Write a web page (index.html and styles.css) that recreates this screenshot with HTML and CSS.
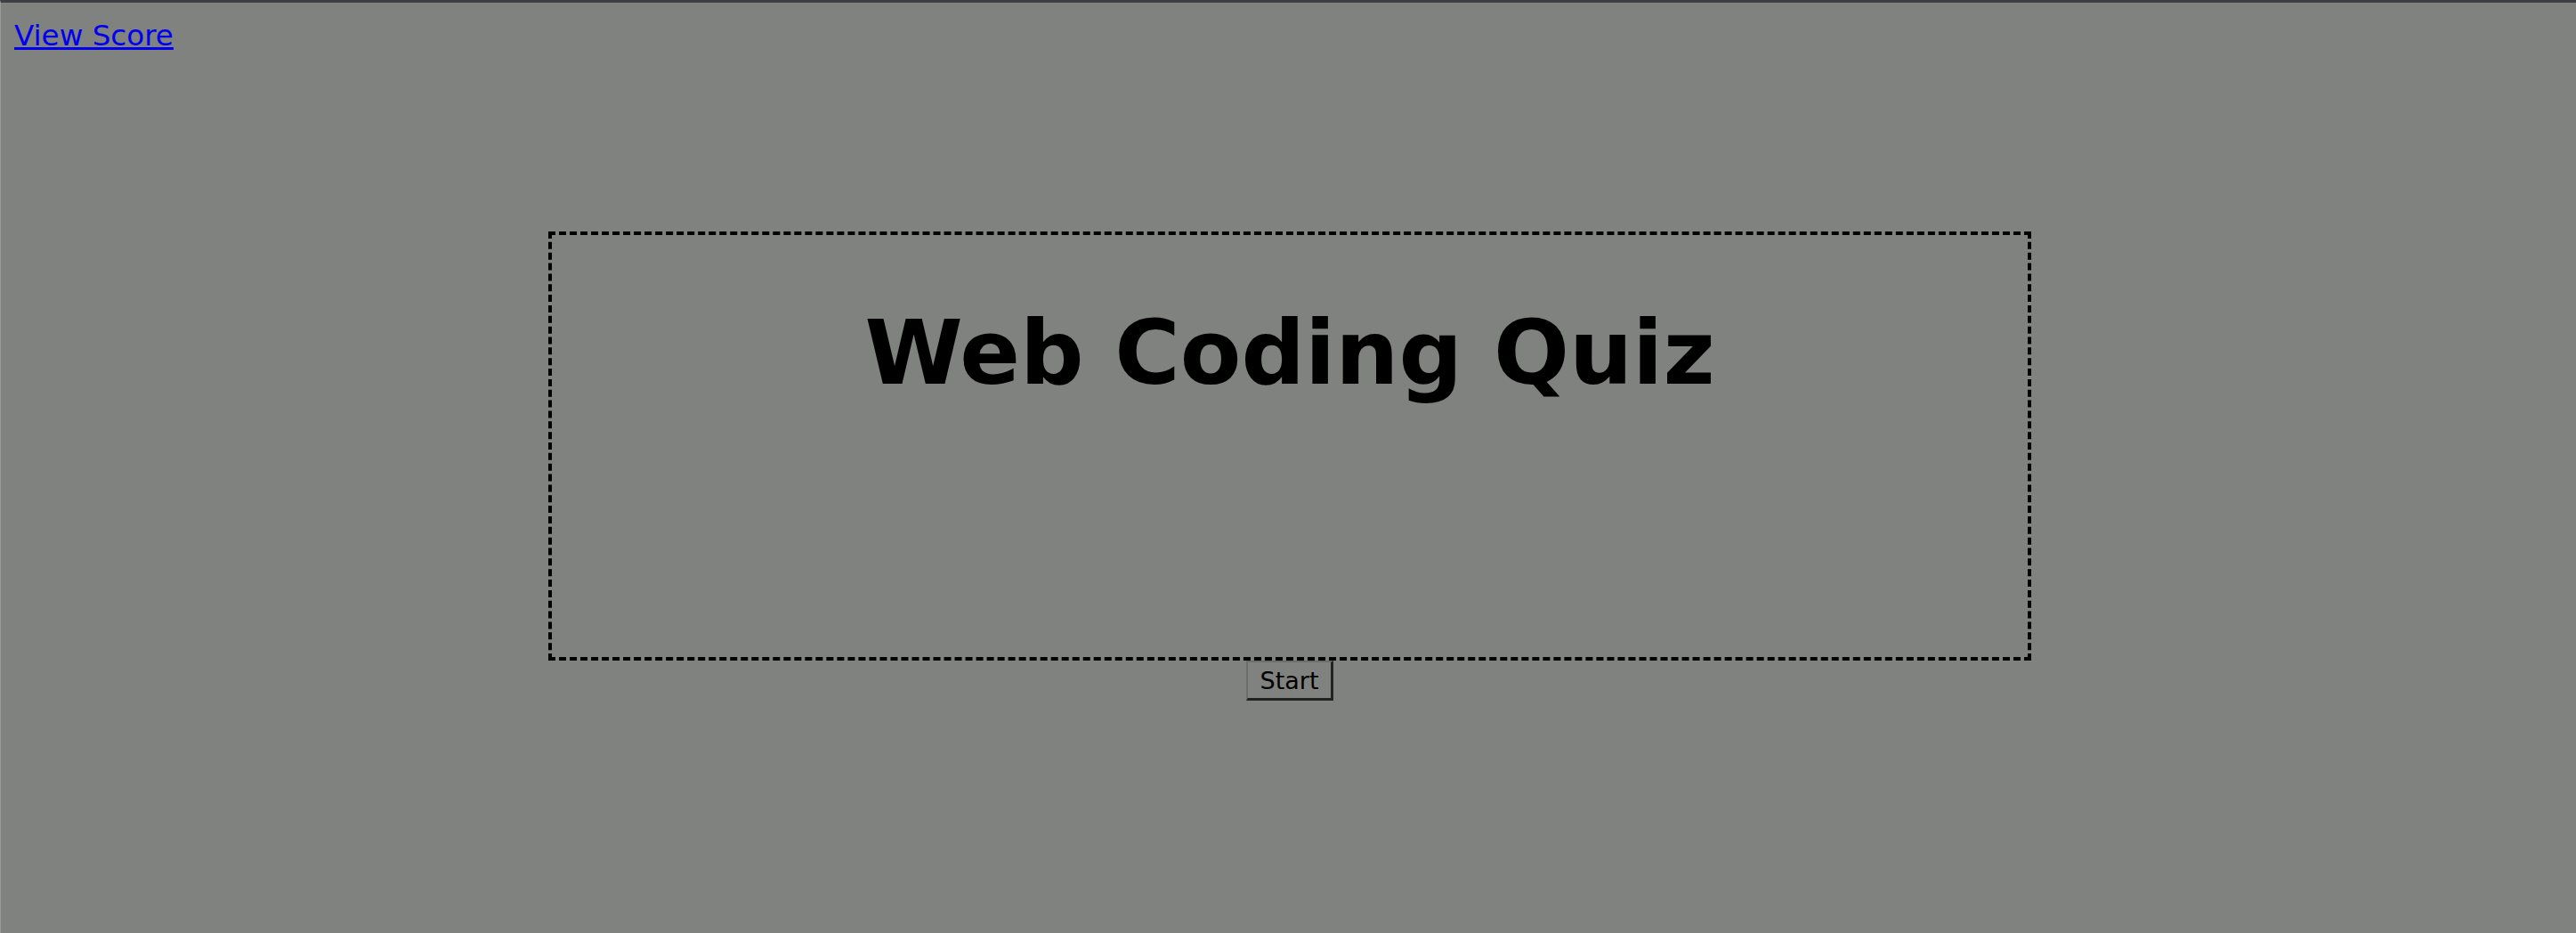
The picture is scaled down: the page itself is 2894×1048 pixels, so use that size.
FILE: index.html
```html
<!DOCTYPE html>
<html lang="en">
<head>
<meta charset="utf-8">
<title>Web Coding Quiz</title>
<link rel="stylesheet" href="styles.css">
</head>
<body>
<nav class="top-nav">
  <a class="score-link" href="#">View Score</a>
</nav>
<main class="quiz">
  <section class="quiz-box">
    <h1 class="quiz-title">Web Coding Quiz</h1>
  </section>
  <button class="start-btn" type="button">Start</button>
</main>
</body>
</html>
```

FILE: styles.css
```css
html {
  background: #80827f;
  border-top: 3px solid #3d4042;
  border-left: 1px solid #9a9b99;
  min-height: 100%;
  box-sizing: border-box;
}

body {
  margin: 0;
  padding: 19px 16px 0 15px;
  font-family: "DejaVu Sans", Verdana, sans-serif;
  color: #000;
}

.top-nav {
  display: flex;
}

.score-link {
  font-size: 32.6px;
  line-height: 37px;
  color: #0000ee;
  text-decoration: underline;
}

.quiz {
  display: flex;
  flex-direction: column;
  align-items: center;
  margin-top: 201px;
}

.quiz-box {
  box-sizing: border-box;
  width: 1666px;
  height: 482px;
  border: 4px dashed #000;
  padding-top: 74px;
  margin-left: 4px;
}

.quiz-title {
  margin: 0;
  text-align: center;
  font-size: 100px;
  font-weight: bold;
  line-height: normal;
}

.start-btn {
  box-sizing: border-box;
  width: 98px;
  height: 45px;
  padding: 0;
  margin-left: 4px;
  font-family: "DejaVu Sans", Verdana, sans-serif;
  font-size: 27px;
  color: #000;
  background: #80827f;
  border-style: solid;
  border-width: 2px 3px 3px 2px;
  border-color: #6c6e6b #222 #222 #6c6e6b;
}
```
